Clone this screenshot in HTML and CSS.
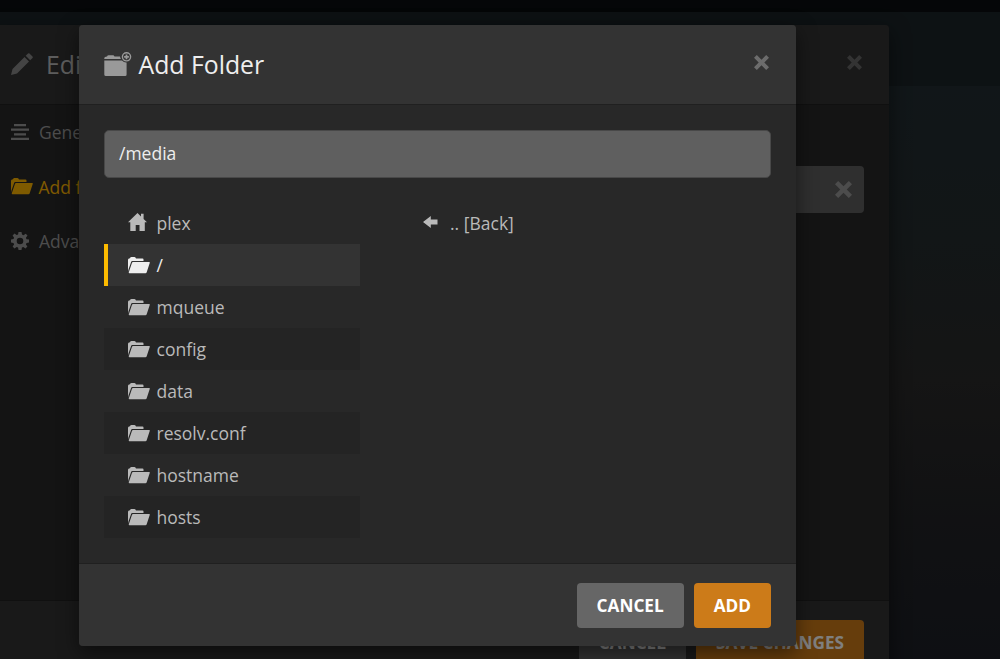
FILE: index.html
```html
<!DOCTYPE html>
<html lang="en">
<head>
    <meta charset="UTF-8">
    <meta name="viewport" content="width=device-width, initial-scale=1.0">
    <title>Add Folder</title>
    <link rel="stylesheet" href="styles.css">
</head>
<body>
    <svg class="symbols" width="0" height="0">
        <symbol id="folder" viewBox="0 0 22 17">
            <path d="M0 15V3Q0 1.700 1 1.500L2 1.200Q2.300 0 3.500 0H6.500Q7.700 0 8 1.500H14.500Q15.500 1.500 15.500 2.500V4H4.200Q3.500 4 3.200 4.800L.3 13Z"/>
            <path d="M5 5H21.200Q22 5 21.800 5.800L18.700 15.300Q18.400 16.200 17.500 16.200H1.500Q.4 16.200 .8 15.200L4 5.800Q4.300 5 5 5Z"/>
        </symbol>
        <symbol id="cross" viewBox="0 0 16 16">
            <path d="M3 0 8 5 13 0 16 3 11 8 16 13 13 16 8 11 3 16 0 13 5 8 0 3Z"/>
        </symbol>
    </svg>

    <div class="page">
        <div class="navbar"></div>
        <div class="toolbar"></div>
    </div>

    <!-- edit library window -->
    <div class="modal edit-modal">
        <div class="modal-header">
            <svg class="pencil" viewBox="0 0 22 22"><path d="M0 22 1.500 16 13.500 4 18 8.500 6 20.500ZM14.700 2.800 17 .5Q17.700-.2 18.500.5L21.500 3.500Q22.200 4.300 21.500 5L19.200 7.300Z"/></svg>
            <h2>Edit</h2>
            <button class="close"><svg><use href="#cross"/></svg></button>
        </div>
        <div class="modal-body">
            <ul class="tabs">
                <li><svg viewBox="0 0 18 16"><path d="M3 0H15V2.200H3ZM0 4.600H18V6.800H0ZM3 9.200H15V11.400H3ZM0 13.800H18V16H0Z"/></svg>General</li>
                <li class="active"><svg class="wide" viewBox="0 0 22 17"><use href="#folder"/></svg>Add folders</li>
                <li><svg viewBox="0 0 18 18"><path fill-rule="evenodd" d="M7.500 0H10.500L11 2.600 12.500 3.200 14.700 1.700 16.500 3.600 14.900 5.700 15.500 7.200 18 7.600V10.400L15.500 10.900 14.900 12.400 16.400 14.500 14.500 16.400 12.300 14.900 10.900 15.500 10.500 18H7.500L7.100 15.500 5.600 14.900 3.500 16.400 1.600 14.500 3.100 12.400 2.500 10.900 0 10.400V7.600L2.500 7.100 3.100 5.700 1.600 3.500 3.500 1.600 5.600 3.100 7.100 2.500ZM9 5.700A3.300 3.300 0 1 0 9 12.300 3.300 3.300 0 0 0 9 5.700Z"/></svg>Advanced</li>
            </ul>
            <div class="folder-row"><svg><use href="#cross"/></svg></div>
        </div>
        <div class="modal-footer">
            <button class="btn">CANCEL</button>
            <button class="btn btn-primary">SAVE CHANGES</button>
        </div>
    </div>

    <div class="backdrop"></div>

    <!-- add folder window -->
    <div class="modal add-modal">
        <div class="modal-header">
            <svg class="add-icon" viewBox="0 0 28 24">
                <path d="M.3 7V6.300Q.3 5 1.800 4.700L3 4.400Q3.500 3.200 4.500 3.200H9Q10 3.200 10.500 4.400H16Q16.300 6 17 7ZM.3 8.500H18Q20 10.600 22.600 10.400V22.500Q22.600 24 21.100 24H1.800Q.3 24 .3 22.500Z"/>
                <path fill-rule="evenodd" d="M22.500 0A4.800 4.800 0 1 0 22.500 9.600 4.800 4.800 0 0 0 22.500 0ZM22.500 1.400A3.400 3.400 0 1 1 22.500 8.200 3.400 3.400 0 0 1 22.500 1.400Z"/>
                <path d="M21.600 2.400H23.400V3.900H24.900V5.700H23.400V7.200H21.600V5.700H20.100V3.900H21.600Z"/>
            </svg>
            <h2>Add Folder</h2>
            <button class="close"><svg><use href="#cross"/></svg></button>
        </div>
        <div class="modal-body">
            <input class="path" type="text" value="/media">
            <div class="browser">
                <ul class="list">
                    <li><svg class="home" viewBox="0 0 19 18"><path d="M9.500 0 13 3.400V.7H15.600V6L19 9.300H16.800V18H11.500V12H7.700V18H2.300V9.300H0Z"/></svg>plex</li>
                    <li class="selected"><svg><use href="#folder"/></svg>/</li>
                    <li><svg><use href="#folder"/></svg>mqueue</li>
                    <li><svg><use href="#folder"/></svg>config</li>
                    <li><svg><use href="#folder"/></svg>data</li>
                    <li><svg><use href="#folder"/></svg>resolv.conf</li>
                    <li><svg><use href="#folder"/></svg>hostname</li>
                    <li><svg><use href="#folder"/></svg>hosts</li>
                </ul>
                <ul class="list">
                    <li><svg class="back" viewBox="0 0 15 12"><path d="M0 6 7.800 0V3.500H14.500V8.500H7.800V12Z"/></svg>.. [Back]</li>
                </ul>
            </div>
        </div>
        <div class="modal-footer">
            <button class="btn">CANCEL</button>
            <button class="btn btn-primary">ADD</button>
        </div>
    </div>
</body>
</html>
```
FILE: styles.css
```css
* {
    box-sizing: border-box;
}

body {
    margin: 0;
    height: 659px;
    overflow: hidden;
    position: relative;
    background: #000;
    font-family: "Open Sans", sans-serif;
    font-size: 17.5px;
    color: #bababa;
}

h2, ul {
    margin: 0;
    padding: 0;
}

ul {
    list-style: none;
}

svg {
    fill: currentColor;
    flex: none;
}

.symbols {
    position: absolute;
}

.page {
    height: 659px;
    background: linear-gradient(#222d32 86px, #242c2e 240px, #2a2a2a 380px, #222326 520px, #1c1f26 100%);
}

.navbar {
    height: 12px;
    background: #0a0d10;
}

.toolbar {
    height: 74px;
    background: #1b2428;
}

.backdrop {
    position: absolute;
    inset: 0;
    background: rgba(0, 0, 0, 0.5);
}

.modal {
    position: absolute;
    top: 25px;
    width: 717px;
    display: flex;
    flex-direction: column;
    background: #282828;
    border-radius: 4px;
    box-shadow: 0 7px 20px rgba(0, 0, 0, 0.5);
    overflow: hidden;
}

.edit-modal {
    left: -14px;
    width: 903px;
    height: 658px;
}

.add-modal {
    left: 79px;
    height: 621px;
}

.modal-header {
    height: 80px;
    flex: none;
    display: flex;
    align-items: center;
    padding: 0 25px;
    background: #333;
    border-bottom: 1px solid #202020;
}

.modal-header h2 {
    flex: 1;
    font-size: 24.8px;
    font-weight: 400;
    line-height: 34px;
    color: #eee;
    padding-bottom: 2px;
}

.edit-modal h2 {
    color: #bbb;
}

.add-icon {
    width: 28px;
    height: 24px;
    margin-right: 6.5px;
    margin-bottom: 1px;
    color: #999;
}

.pencil {
    width: 22px;
    height: 22px;
    margin-right: 13px;
    margin-bottom: 1px;
    color: #888;
}

.close {
    display: flex;
    padding: 0;
    margin: 0 2px 4px 0;
    border: none;
    background: none;
    color: #6c6c6c;
}

.edit-modal .close {
    color: #666;
}

.close svg {
    width: 15px;
    height: 15px;
}

.modal-body {
    flex: 1;
    padding: 25px;
}

.path {
    display: block;
    width: 100%;
    height: 48px;
    padding: 0 14px 2px;
    border: 1px solid #484848;
    border-radius: 5px;
    background: #5f5f5f;
    color: #eee;
    font: inherit;
}

.browser {
    display: flex;
    gap: 39px;
    margin-top: 24px;
}

.list {
    width: 256px;
}

.list li {
    height: 42px;
    display: flex;
    align-items: center;
    padding: 0 0 1px 24px;
}

.list svg {
    width: 22px;
    height: 17px;
    margin-top: 1px;
    margin-right: 6.5px;
}

.list .home {
    width: 19px;
    height: 18px;
    margin-top: 0;
    margin-right: 9.5px;
    margin-bottom: 2px;
}

.list .back {
    width: 15px;
    height: 12px;
    margin-top: 0;
    margin-right: 12px;
    margin-bottom: 1px;
}

.list li:nth-child(even) {
    background: #242424;
}

.list li.selected {
    background: #333;
    border-left: 4px solid #fdbb00;
    padding-left: 20px;
    color: #eee;
}

.modal-footer {
    height: 83px;
    flex: none;
    display: flex;
    justify-content: flex-end;
    gap: 10px;
    padding: 19px 25px;
    background: #333;
    border-top: 1px solid #202020;
}

.btn {
    height: 45px;
    padding: 0 20px 1px;
    border: none;
    border-radius: 4px;
    background: #666;
    color: #fff;
    font: bold 17.2px "Open Sans", sans-serif;
}

.btn-primary {
    background: #cc7b19;
}

.edit-modal .modal-body {
    display: flex;
    padding: 0 25px;
}

.tabs {
    width: 240px;
}

.tabs li {
    height: 54.5px;
    display: flex;
    align-items: center;
    color: #999;
}

.tabs svg {
    width: 18px;
    height: 18px;
    margin-right: 10px;
}

.tabs .wide {
    width: 22px;
    height: 17px;
    margin-right: 5.5px;
}

.tabs .active {
    color: #fdb400;
}

.folder-row {
    flex: 1;
    height: 47px;
    margin-top: 61px;
    display: flex;
    align-items: center;
    justify-content: flex-end;
    padding-right: 12.5px;
    border-radius: 4px;
    background: #5f5f5f;
    color: #999;
}

.folder-row svg {
    width: 17px;
    height: 17px;
}
```
